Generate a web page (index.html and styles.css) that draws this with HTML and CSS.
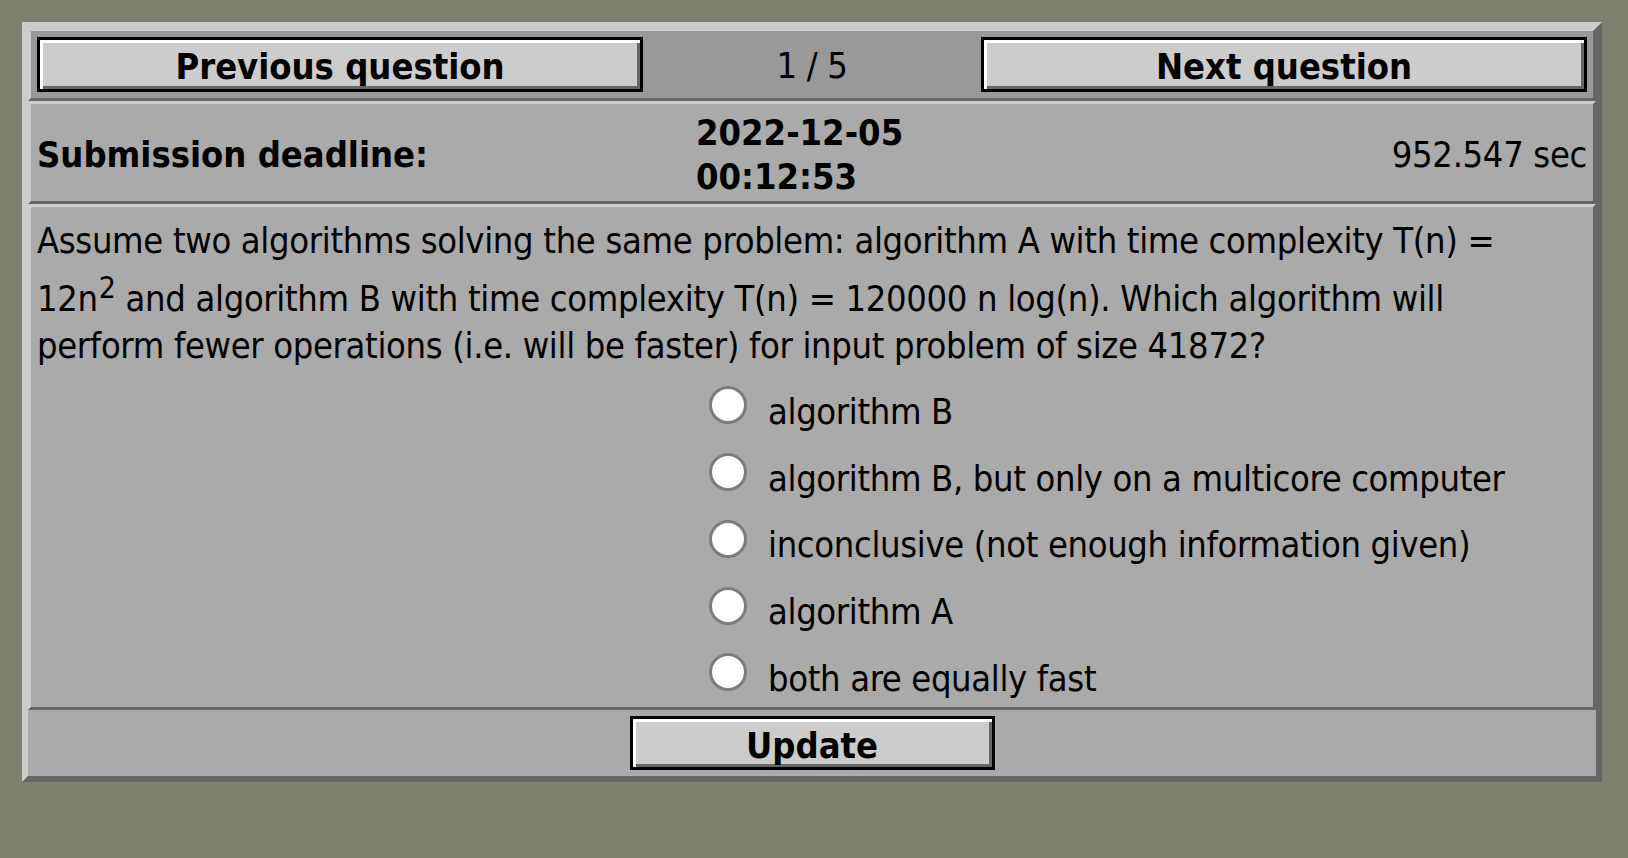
FILE: index.html
```html
<!DOCTYPE html>
<html>
<head>
<meta charset="utf-8">
<title>Quiz</title>
<link rel="stylesheet" href="styles.css">
</head>
<body>
<form class="quiz">
  <div class="cell nav">
    <button type="button" class="btn">Previous question</button>
    <div class="counter">1 / 5</div>
    <button type="button" class="btn">Next question</button>
  </div>
  <div class="cell deadline">
    <div class="label">Submission deadline:</div>
    <div class="date">2022-12-05<br>00:12:53</div>
    <div class="remaining">952.547 sec</div>
  </div>
  <div class="cell question">
    <p class="qtext">Assume two algorithms solving the same problem: algorithm A with time complexity T(n) = 12n<sup>2</sup> and algorithm B with time complexity T(n) = 120000 n log(n). Which algorithm will perform fewer operations (i.e. will be faster) for input problem of size 41872?</p>
    <div class="options">
      <label class="option"><input type="radio" name="answer" class="radio"><span class="otext">algorithm B</span></label>
      <label class="option"><input type="radio" name="answer" class="radio"><span class="otext">algorithm B, but only on a multicore computer</span></label>
      <label class="option"><input type="radio" name="answer" class="radio"><span class="otext">inconclusive (not enough information given)</span></label>
      <label class="option"><input type="radio" name="answer" class="radio"><span class="otext">algorithm A</span></label>
      <label class="option"><input type="radio" name="answer" class="radio"><span class="otext">both are equally fast</span></label>
    </div>
  </div>
  <div class="submit">
    <button type="button" class="btn update">Update</button>
  </div>
</form>
</body>
</html>
```
FILE: styles.css
```css
html, body {
  margin: 0;
}
body {
  padding: 22px;
  background: #808070;
  font-family: "DejaVu Sans Condensed", "DejaVu Sans", sans-serif;
  font-size: 36px;
  color: #000;
}
.quiz {
  width: 1580px;
  box-sizing: border-box;
  margin: 0;
  border: 6px solid;
  border-color: #cccccc #666666 #666666 #cccccc;
  background: #aaaaaa;
}
.cell {
  border: 3px solid;
  border-color: #cccccc #666666 #666666 #cccccc;
}
.btn {
  font-family: inherit;
  font-size: 36px;
  font-weight: bold;
  color: #000;
  background: #cccccc;
  border: 3px solid #000;
  box-shadow: inset 3px 3px 0 #ffffff, inset -3px -3px 0 #666666;
  height: 55px;
  box-sizing: border-box;
  padding: 4px 0 0 0;
  margin: 0;
  line-height: 43px;
}
.nav {
  background: #999999;
  display: grid;
  grid-template-columns: 606px 1fr 606px;
  align-items: center;
  padding: 6px;
}
.counter {
  text-align: center;
  line-height: 43px;
  padding-top: 2px;
  letter-spacing: -0.33px;
}
.deadline {
  display: grid;
  grid-template-columns: 647px auto 1fr;
  column-gap: 12px;
  align-items: center;
  padding: 7px 6px 3px 6px;
  line-height: 43.5px;
}
.label, .date {
  font-weight: bold;
}
.remaining {
  text-align: right;
  letter-spacing: -0.33px;
}
.question {
  padding: 0;
}
.qtext {
  margin: 0;
  padding: 10px 60px 4px 6px;
  line-height: 47px;
  letter-spacing: -0.33px;
}
.qtext sup {
  padding-left: 1px;
}
.options {
  padding-left: 678px;
}
.option {
  display: flex;
  align-items: center;
  height: 66.75px;
  gap: 21px;
}
.radio {
  appearance: none;
  -webkit-appearance: none;
  width: 38px;
  height: 38px;
  margin: 0 0 2px 0;
  border: 3px solid #7c7c7c;
  border-radius: 50%;
  background: #ffffff;
  box-sizing: border-box;
  flex: none;
}
.otext {
  margin-top: 10px;
  line-height: 43px;
  letter-spacing: -0.35px;
}
.submit {
  display: flex;
  justify-content: center;
  padding: 6px;
}
.update {
  width: 365px;
  height: 54px;
  padding-top: 5px;
}
```
